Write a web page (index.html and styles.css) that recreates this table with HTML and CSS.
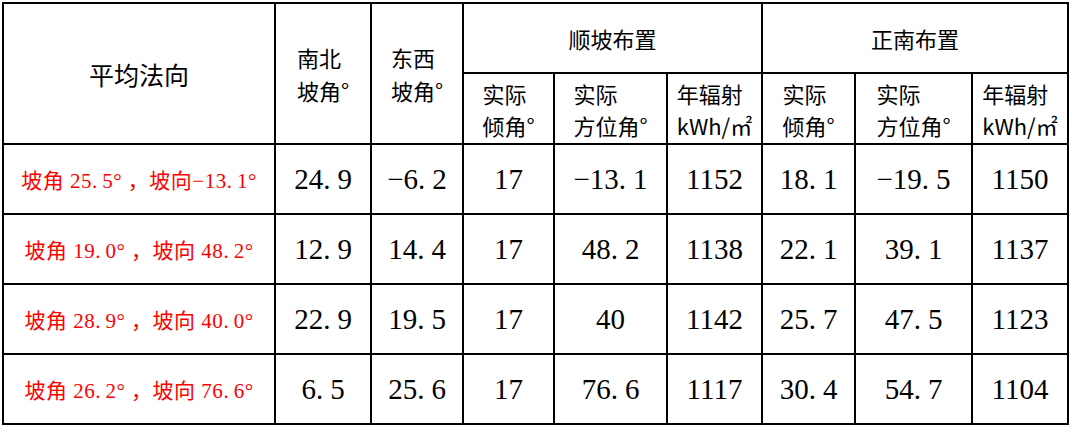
FILE: index.html
```html
<!DOCTYPE html>
<html lang="zh">
<head>
<meta charset="utf-8">
<link rel="stylesheet" href="styles.css">
</head>
<body>
<table class="grid">
  <colgroup>
    <col class="c-name"><col class="c-ns"><col class="c-ew">
    <col class="c-a1"><col class="c-a2"><col class="c-a3">
    <col class="c-b1"><col class="c-b2"><col class="c-b3">
  </colgroup>
  <thead>
    <tr class="r-h1">
      <th rowspan="2" class="h-main">平均法向</th>
      <th rowspan="2" class="h-two"><span class="stack">南北<br>坡角°</span></th>
      <th rowspan="2" class="h-two"><span class="stack">东西<br>坡角°</span></th>
      <th colspan="3" class="h-group">顺坡布置</th>
      <th colspan="3" class="h-group">正南布置</th>
    </tr>
    <tr class="r-h2">
      <th class="h-sub"><span class="stack">实际<br>倾角°</span></th>
      <th class="h-sub"><span class="stack">实际<br>方位角°</span></th>
      <th class="h-sub"><span class="stack">年辐射<br>kWh/㎡</span></th>
      <th class="h-sub"><span class="stack">实际<br>倾角°</span></th>
      <th class="h-sub"><span class="stack">实际<br>方位角°</span></th>
      <th class="h-sub"><span class="stack">年辐射<br>kWh/㎡</span></th>
    </tr>
  </thead>
  <tbody>
    <tr class="r-d">
      <td class="label">坡角 25<span class="dot">.</span>5° ，坡向−13<span class="dot">.</span>1°</td>
      <td>24<span class="dot">.</span>9</td>
      <td>−6<span class="dot">.</span>2</td>
      <td>17</td>
      <td>−13<span class="dot">.</span>1</td>
      <td>1152</td>
      <td>18<span class="dot">.</span>1</td>
      <td>−19<span class="dot">.</span>5</td>
      <td>1150</td>
    </tr>
    <tr class="r-d">
      <td class="label">坡角 19<span class="dot">.</span>0° ，坡向 48<span class="dot">.</span>2°</td>
      <td>12<span class="dot">.</span>9</td>
      <td>14<span class="dot">.</span>4</td>
      <td>17</td>
      <td>48<span class="dot">.</span>2</td>
      <td>1138</td>
      <td>22<span class="dot">.</span>1</td>
      <td>39<span class="dot">.</span>1</td>
      <td>1137</td>
    </tr>
    <tr class="r-d">
      <td class="label">坡角 28<span class="dot">.</span>9° ，坡向 40<span class="dot">.</span>0°</td>
      <td>22<span class="dot">.</span>9</td>
      <td>19<span class="dot">.</span>5</td>
      <td>17</td>
      <td>40</td>
      <td>1142</td>
      <td>25<span class="dot">.</span>7</td>
      <td>47<span class="dot">.</span>5</td>
      <td>1123</td>
    </tr>
    <tr class="r-d">
      <td class="label">坡角 26<span class="dot">.</span>2° ，坡向 76<span class="dot">.</span>6°</td>
      <td>6<span class="dot">.</span>5</td>
      <td>25<span class="dot">.</span>6</td>
      <td>17</td>
      <td>76<span class="dot">.</span>6</td>
      <td>1117</td>
      <td>30<span class="dot">.</span>4</td>
      <td>54<span class="dot">.</span>7</td>
      <td>1104</td>
    </tr>
  </tbody>
</table>
</body>
</html>
```

FILE: styles.css
```css
html, body {
  margin: 0;
  padding: 0;
  background: #ffffff;
}

body {
  padding: 2px 0 0 2px;
  font-family: "Liberation Serif", "Noto Sans CJK SC", serif;
  color: #000000;
}

.grid {
  border-collapse: collapse;
  table-layout: fixed;
  width: 1065px;
}

.grid th,
.grid td {
  border: 2px solid #000000;
  padding: 0;
  text-align: center;
  vertical-align: middle;
  font-weight: normal;
}

.c-name { width: 272px; }
.c-ns { width: 96px; }
.c-ew { width: 92px; }
.c-a1 { width: 91px; }
.c-a2 { width: 113px; }
.c-a3 { width: 95px; }
.c-b1 { width: 93px; }
.c-b2 { width: 117px; }
.c-b3 { width: 96px; }

.r-h1 { height: 70px; }
.r-h2 { height: 71px; }
.r-d { height: 70px; }

.h-main {
  font-family: "Noto Sans CJK SC", sans-serif;
  font-size: 25px;
}

.h-group {
  font-family: "Noto Sans CJK SC", sans-serif;
  font-size: 22px;
}

.stack {
  display: inline-block;
  text-align: left;
  font-family: "Noto Sans CJK SC", sans-serif;
  font-size: 22px;
  line-height: 33px;
}

.h-sub .stack {
  line-height: 32px;
}

.grid td {
  font-size: 29px;
}

.dot {
  letter-spacing: 7px;
}

.grid td.label {
  color: #ff0000;
  font-size: 21px;
  letter-spacing: 0.5px;
  font-family: "Liberation Serif", "Noto Sans CJK SC", serif;
}

.label .dot {
  letter-spacing: 5px;
}
```
